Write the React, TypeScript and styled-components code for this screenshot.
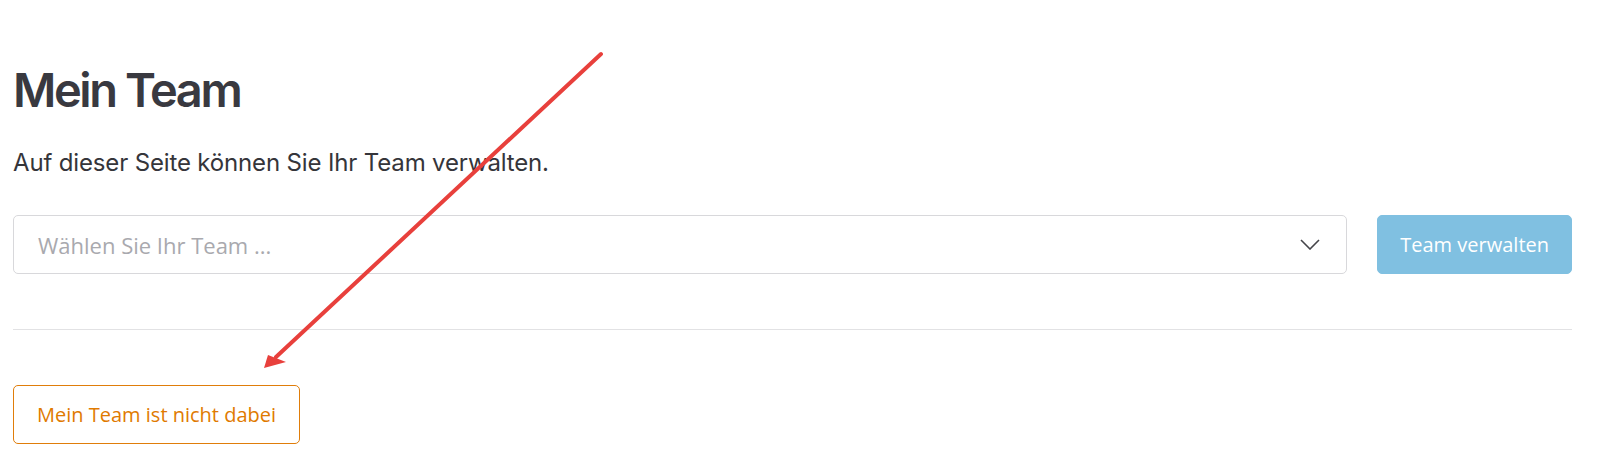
import * as React from "react";
import styled, { createGlobalStyle } from "styled-components";

const GlobalStyle = createGlobalStyle`
  html, body {
    margin: 0;
    padding: 0;
    background: #fff;
  }
  body {
    font-family: Inter, "Noto Sans", sans-serif;
  }
`;

const Page = styled.main`
  position: relative;
  box-sizing: border-box;
  width: 1624px;
  height: 465px;
  padding: 62px 52px 0 13px;
  display: flex;
  flex-direction: column;
  overflow: hidden;
`;

const Title = styled.h1`
  margin: 0;
  font-family: Inter, sans-serif;
  font-size: 47px;
  font-weight: 600;
  line-height: 56px;
  letter-spacing: -2.4px;
  color: #393940;
`;

const Lead = styled.p`
  margin: 27px 0 0;
  font-family: Inter, sans-serif;
  font-size: 24px;
  line-height: 36px;
  letter-spacing: -0.15px;
  color: #35353a;
`;

const PickerRow = styled.div`
  display: flex;
  gap: 30px;
  margin-top: 34px;
`;

const Select = styled.div`
  flex: 1;
  box-sizing: border-box;
  height: 59px;
  display: flex;
  align-items: center;
  justify-content: space-between;
  padding: 0 26px 0 24px;
  border: 1px solid #d8d8db;
  border-radius: 5px;
  background: #fff;
`;

const Placeholder = styled.span`
  font-family: "Open Sans", sans-serif;
  font-size: 22px;
  color: #a9a9ae;
`;

const Button = styled.button<{ $variant: "primary" | "outline" }>`
  box-sizing: border-box;
  height: 59px;
  padding: 0 ${(p) => (p.$variant === "primary" ? "22px" : "23px")};
  border-radius: 5px;
  font-family: "Open Sans", sans-serif;
  font-size: 20px;
  cursor: pointer;
  border: 1px solid ${(p) => (p.$variant === "primary" ? "#80c0e1" : "#e07d0a")};
  background: ${(p) => (p.$variant === "primary" ? "#80c0e1" : "#fff")};
  color: ${(p) => (p.$variant === "primary" ? "#fff" : "#e07a00")};
`;

const Divider = styled.hr`
  margin: 55px 0 0;
  border: 0;
  border-top: 1px solid #e2e2e4;
`;

const Actions = styled.div`
  display: flex;
  margin-top: 55px;
`;

const Annotation = styled.svg`
  position: absolute;
  left: 0;
  top: 0;
  pointer-events: none;
`;

const Chevron = () => (
  <svg width="20" height="11" viewBox="0 0 20 11" fill="none">
    <path d="M1 1l9 9 9-9" stroke="#45454a" strokeWidth="1.6" />
  </svg>
);

export default function App() {
  return (
    <>
      <GlobalStyle />
      <Page>
        <Title>Mein Team</Title>
        <Lead>Auf dieser Seite können Sie Ihr Team verwalten.</Lead>
        <PickerRow>
          <Select>
            <Placeholder>Wählen Sie Ihr Team ...</Placeholder>
            <Chevron />
          </Select>
          <Button $variant="primary">Team verwalten</Button>
        </PickerRow>
        <Divider />
        <Actions>
          <Button $variant="outline">Mein Team ist nicht dabei</Button>
        </Actions>
        <Annotation width="1624" height="465" viewBox="0 0 1624 465">
          <line x1="601" y1="54" x2="276" y2="357" stroke="#e8403c" strokeWidth="4" strokeLinecap="round" />
          <polygon points="264,368 268,355 286,362" fill="#e8403c" />
        </Annotation>
      </Page>
    </>
  );
}
